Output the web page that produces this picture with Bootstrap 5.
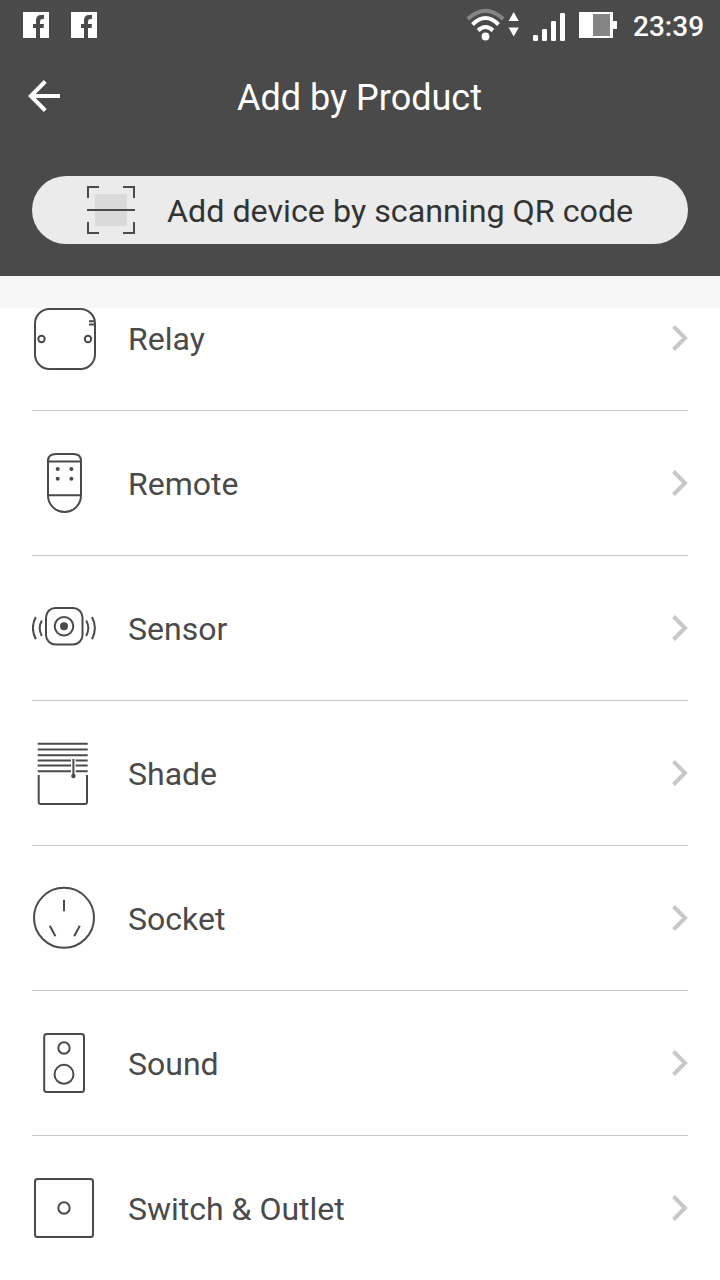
<!DOCTYPE html>
<html lang="en">
<head>
<meta charset="utf-8">
<meta name="viewport" content="width=device-width, initial-scale=1">
<title>Add by Product</title>
<link rel="stylesheet" href="https://cdn.jsdelivr.net/npm/bootstrap@5.3.0/dist/css/bootstrap.min.css">
<style>
body{font-family:Roboto,sans-serif;color:#4a4a4a;width:720px;height:1280px}
svg{display:block;flex:none}
.app-top{background:#4a4a4a;height:276px}
.status-strip{height:50px;padding:0 16px 0 23px}
.clock{font-size:28px;font-weight:500;line-height:50px;width:71px;margin-left:16px;padding-top:3px;white-space:nowrap}
.title-bar{height:96px;padding:0 28px}
.title-bar h1{font-size:36px;font-weight:400;line-height:96px}
.back-arrow{margin-bottom:4px}
.scan-btn{height:68px;margin:30px 32px 0;padding:0 55px;background:#ebebeb;color:#333;font-size:32.25px;line-height:66px;white-space:nowrap}
.scan-btn span{margin-left:32px;padding-top:2px}
.spacer-band{height:32px;background:#f7f7f7}
.products{height:972px}
.product-list{margin:-42px 32px 0}
.product{height:145px;border-bottom:1px solid #c8c8c8;font-size:32px;line-height:48px}
.product .label{margin-left:32px;padding-top:2px}
.line-icon{fill:none;stroke:#4a4a4a;stroke-width:2}
.line-icon .dot{fill:#4a4a4a;stroke:none}
.chev{fill:none;stroke:#c7c7cc;stroke-width:4}
</style>
</head>
<body class="bg-white overflow-hidden">
<svg width="0" height="0" class="position-absolute" aria-hidden="true">
  <symbol id="chev" viewBox="0 0 18 28"><path d="M3.500 2.500 15 14 3.500 25.500"/></symbol>
  <symbol id="fb" viewBox="0 0 26 26"><path fill="#fff" fill-rule="evenodd" d="M0 0H26V26H17V16H20.500L21 12H17V9.500Q17 7 19 7H21V3H18Q13 3 13 8.500V12H10V16H13V26H0Z"/></symbol>
</svg>
<header class="app-top text-white">
  <div class="status-strip d-flex align-items-center">
    <svg width="26" height="26"><use href="#fb"/></svg>
    <svg width="26" height="26" style="margin-left:22px"><use href="#fb"/></svg>
    <svg class="ms-auto" width="54" height="50" viewBox="466 0 54 50" fill="none" stroke-linecap="butt">
      <path d="M467.800 19Q485.500 2.500 503.200 19" stroke="#858585" stroke-width="4"/>
      <path d="M472.500 24.500Q485.500 11.500 498.500 24.500M478 30.500Q485.500 23.500 493 30.500" stroke="#fff" stroke-width="4"/>
      <circle cx="485.500" cy="36.500" r="3.900" fill="#fff"/>
      <path d="M513.700 12 518.800 21H508.600ZM513.700 36.500 518.800 27.500H508.600Z" fill="#fff"/>
    </svg>
    <svg width="34" height="50" viewBox="532 0 34 50" style="margin-left:12px" fill="#fff">
      <rect x="533" y="35" width="5" height="6" rx="1.200"/><rect x="542" y="29" width="5" height="12" rx="1.200"/><rect x="551" y="21" width="5" height="20" rx="1.200"/><rect x="560" y="13" width="5" height="28" rx="1.200"/>
    </svg>
    <svg width="38" height="50" viewBox="579 0 38 50" style="margin-left:13px" fill="#fff">
      <path d="M579 12H613V21H617V29H613V38H579Z"/><path fill="#858585" d="M593 14H610V36H593Z"/>
    </svg>
    <div class="clock">23:39</div>
  </div>
  <div class="title-bar d-flex align-items-center">
    <svg class="back-arrow" width="32" height="34" viewBox="0 0 32 34" fill="none" stroke="#fff" stroke-width="4"><path d="M17.300 2.500 2.800 17 17.300 31.500M3 17H32"/></svg>
    <h1 class="flex-fill text-center mb-0" style="margin-right:33px">Add by Product</h1>
  </div>
  <div class="scan-btn rounded-pill d-flex align-items-center" role="button">
    <svg width="48" height="48" viewBox="0 0 48 48" fill="none" stroke="#4a4a4a" stroke-width="2"><path fill="#dadada" stroke="none" d="M8 8H40V40H8Z"/><path d="M1 12V1H12M36 1H47V12M1 36V47H12M36 47H47V36M0 24H48"/></svg>
    <span>Add device by scanning QR code</span>
  </div>
</header>
<div class="spacer-band"></div>
<main class="products overflow-hidden">
  <div class="product-list">
    <div class="product d-flex align-items-center">
      <svg class="line-icon" width="64" height="64"><rect x="3" y="3" width="60" height="60" rx="14.500"/><circle cx="9.500" cy="33" r="3.200"/><circle cx="56" cy="33" r="3.200"/><path d="M57 15.200H63M57 18.500H63"/></svg>
      <span class="label">Relay</span><svg class="chev ms-auto" width="18" height="28"><use href="#chev"/></svg>
    </div>
    <div class="product d-flex align-items-center">
      <svg class="line-icon" width="64" height="64"><path d="M16 10Q16 3 24 3H41.500Q49 3 49 10V44.500A16.500 16.500 0 0 1 16 44.500ZM16 10.500H49M16 44.300H49"/><g class="dot"><circle cx="25.700" cy="18" r="2"/><circle cx="39.400" cy="18" r="2"/><circle cx="25.700" cy="27.700" r="2"/><circle cx="39.400" cy="27.700" r="2"/></g></svg>
      <span class="label">Remote</span><svg class="chev ms-auto" width="18" height="28"><use href="#chev"/></svg>
    </div>
    <div class="product d-flex align-items-center">
      <svg class="line-icon" width="64" height="64"><rect x="14" y="12" width="36.500" height="36.500" rx="9.500"/><circle cx="32" cy="30.300" r="9.300"/><circle class="dot" cx="32" cy="30.300" r="4"/><path d="M3.800 21Q-2 32 3.800 43.300M9.800 24.500Q5.600 32 9.800 40M60 21Q65.800 32 60 43.300M54.200 24.500Q58.400 32 54.200 40"/></svg>
      <span class="label">Sensor</span><svg class="chev ms-auto" width="18" height="28"><use href="#chev"/></svg>
    </div>
    <div class="product d-flex align-items-center">
      <svg class="line-icon" width="64" height="64"><path d="M5.700 2.800H55.700M5.700 8.400H55.700M5.700 14.300H55.700M5.700 19.400H39M43.700 19.400H55.700M5.700 24.500H39M43.700 24.500H55.700M5.700 30.300H39M43.700 30.300H55.700M41.400 18V35M6.700 34V61Q6.700 63 8.700 63H53Q55 63 55 61V34"/><circle class="dot" cx="41.400" cy="35" r="2.200"/></svg>
      <span class="label">Shade</span><svg class="chev ms-auto" width="18" height="28"><use href="#chev"/></svg>
    </div>
    <div class="product d-flex align-items-center">
      <svg class="line-icon" width="64" height="64"><circle cx="32" cy="31.800" r="30"/><path d="M32 13.700V25.200M17.800 39.800 23.400 50.300M47.800 39.800 42.200 50.300"/></svg>
      <span class="label">Socket</span><svg class="chev ms-auto" width="18" height="28"><use href="#chev"/></svg>
    </div>
    <div class="product d-flex align-items-center">
      <svg class="line-icon" width="64" height="64"><rect x="12.200" y="3" width="39.800" height="58" rx="2.500"/><circle cx="32" cy="17" r="5.700"/><circle cx="32" cy="43.300" r="9.500"/></svg>
      <span class="label">Sound</span><svg class="chev ms-auto" width="18" height="28"><use href="#chev"/></svg>
    </div>
    <div class="product d-flex align-items-center">
      <svg class="line-icon" width="64" height="64"><rect x="3" y="3" width="58" height="58" rx="2.500"/><circle cx="32" cy="32" r="5.700"/></svg>
      <span class="label">Switch &amp; Outlet</span><svg class="chev ms-auto" width="18" height="28"><use href="#chev"/></svg>
    </div>
  </div>
</main>
<script src="https://cdn.jsdelivr.net/npm/bootstrap@5.3.0/dist/js/bootstrap.bundle.min.js"></script>
</body>
</html>
